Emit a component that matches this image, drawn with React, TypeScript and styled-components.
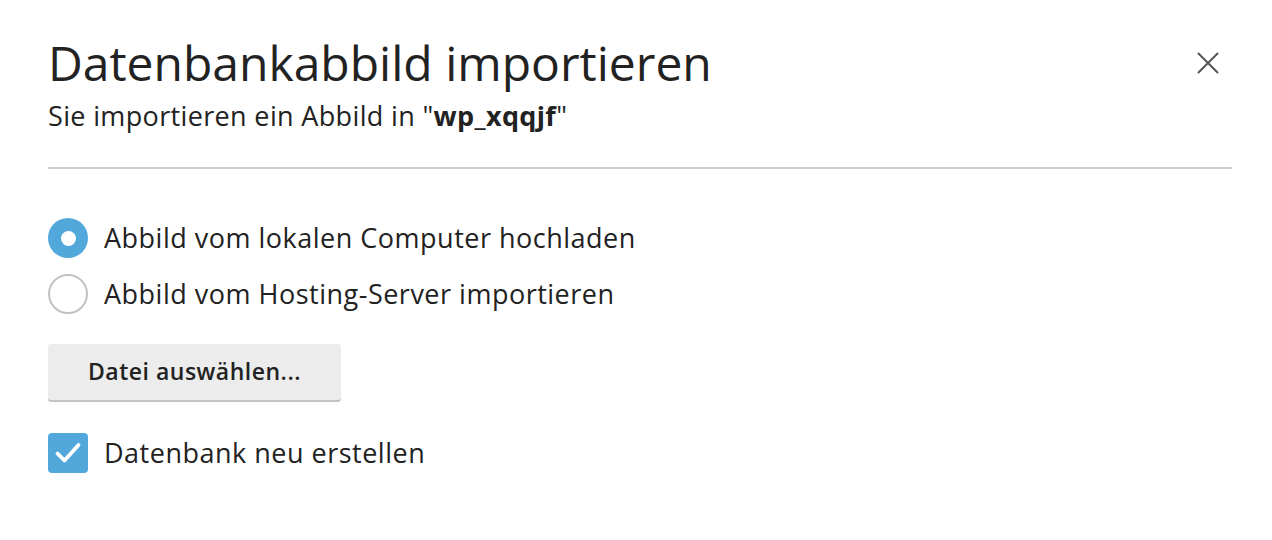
import React from "react";
import styled, { createGlobalStyle } from "styled-components";

const Global = createGlobalStyle`
  html, body { margin: 0; padding: 0; background: #fff; }
  body { font-family: "Open Sans", "Noto Sans", sans-serif; color: #222; }
  * { box-sizing: border-box; }
`;

const Dialog = styled.div`
  width: 1272px;
  height: 540px;
  padding: 35px 40px 0 48px;
  position: relative;
`;

const Header = styled.div`
  display: flex;
  flex-direction: column;
  gap: 7px;
  padding-bottom: 33px;
  border-bottom: 2px solid #cfcfcf;
`;

const Title = styled.h1`
  margin: 0;
  font-size: 48px;
  line-height: 56px;
  font-weight: 400;
  color: #222;
`;

const Subtitle = styled.p`
  margin: 0;
  font-size: 27px;
  line-height: 36px;
  letter-spacing: 0.35px;
  color: #222;
  b { font-weight: 700; }
`;

const Close = styled.button`
  position: absolute;
  top: 48px;
  right: 49px;
  width: 30px;
  height: 30px;
  padding: 0;
  border: 0;
  background: transparent;
  display: flex;
  align-items: center;
  justify-content: center;
  cursor: pointer;
`;

const Body = styled.div`
  display: flex;
  flex-direction: column;
  padding-top: 49px;
`;

const Options = styled.div`
  display: flex;
  flex-direction: column;
  gap: 16px;
`;

const Row = styled.label`
  display: flex;
  align-items: center;
  gap: 16px;
  height: 40px;
  font-size: 27px;
  line-height: 36px;
  letter-spacing: 0.5px;
  color: #222;
`;

const Radio = styled.span<{ $checked?: boolean }>`
  width: 40px;
  height: 40px;
  border-radius: 50%;
  flex: none;
  background: ${(p) => (p.$checked ? "#52a8da" : "#fff")};
  border: ${(p) => (p.$checked ? "none" : "2px solid #c2c2c2")};
  display: flex;
  align-items: center;
  justify-content: center;
  &::after {
    content: "";
    display: ${(p) => (p.$checked ? "block" : "none")};
    width: 15px;
    height: 15px;
    border-radius: 50%;
    background: #fff;
  }
`;

const Button = styled.button`
  margin-top: 30px;
  align-self: flex-start;
  width: 293px;
  height: 56px;
  border: 0;
  border-radius: 3px;
  background: #ececec;
  box-shadow: 0 2px 0 #c4c4c4;
  font-family: "Open Sans", "Noto Sans", sans-serif;
  font-size: 23px;
  letter-spacing: 0.5px;
  font-weight: 600;
  color: #222;
  padding: 0 0 2px;
`;

const CheckRow = styled(Row)`
  margin-top: 33px;
`;

const Checkbox = styled.span`
  width: 40px;
  height: 40px;
  border-radius: 4px;
  background: #52a8da;
  flex: none;
  display: flex;
  align-items: center;
  justify-content: center;
`;

export default function App() {
  return (
    <>
      <Global />
      <Dialog>
        <Header>
          <Title>Datenbankabbild importieren</Title>
          <Subtitle>
            Sie importieren ein Abbild in "<b>wp_xqqjf</b>"
          </Subtitle>
        </Header>
        <Close aria-label="Schließen">
          <svg width="24" height="24" viewBox="0 0 24 24">
            <path d="M2 2 L22 22 M22 2 L2 22" stroke="#555" strokeWidth="2" fill="none" />
          </svg>
        </Close>
        <Body>
          <Options>
            <Row>
              <Radio $checked />
              Abbild vom lokalen Computer hochladen
            </Row>
            <Row>
              <Radio />
              Abbild vom Hosting-Server importieren
            </Row>
          </Options>
          <Button>Datei auswählen...</Button>
          <CheckRow>
            <Checkbox>
              <svg width="28" height="24" viewBox="0 0 28 24">
                <path d="M3.5 12.5 L10.5 19.5 L24.5 4" stroke="#fff" strokeWidth="3.8" fill="none" strokeLinecap="round" strokeLinejoin="round" />
              </svg>
            </Checkbox>
            Datenbank neu erstellen
          </CheckRow>
        </Body>
      </Dialog>
    </>
  );
}
